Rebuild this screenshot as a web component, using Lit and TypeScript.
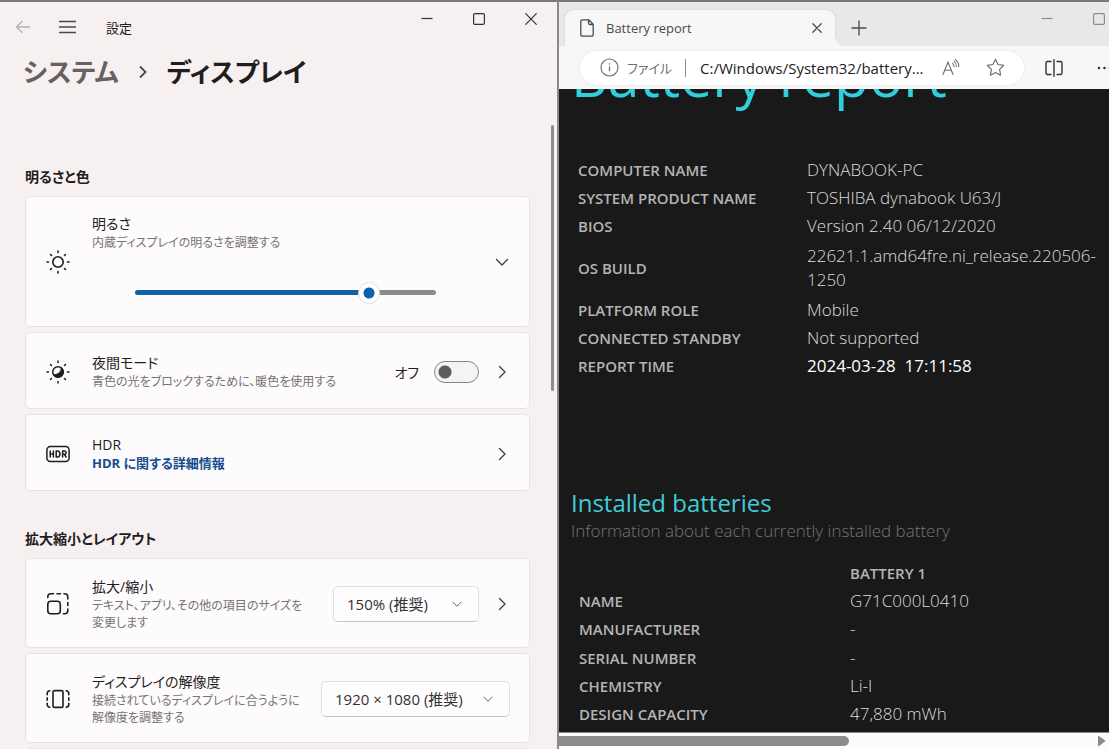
import { LitElement, html, css, svg, nothing } from "lit";
import { customElement, state } from "lit/decorators.js";
import { styleMap } from "lit/directives/style-map.js";

const chevronRight = html`<svg class="chev" width="16" height="16" viewBox="0 0 16 16" fill="none" stroke="currentColor" stroke-width="1.3" stroke-linecap="round" stroke-linejoin="round"><path d="M5.5 2.5 11 8l-5.500 5.500"/></svg>`;
const chevronDown = html`<svg class="chev" width="16" height="16" viewBox="0 0 16 16" fill="none" stroke="currentColor" stroke-width="1.3" stroke-linecap="round" stroke-linejoin="round"><path d="M2.500 5.500 8 11l5.500-5.500"/></svg>`;

const minimizeIcon = html`<svg width="14" height="14" viewBox="0 0 14 14" fill="none" stroke="currentColor" stroke-width="1.2"><path d="M1.500 6.500h11"/></svg>`;
const maximizeIcon = html`<svg width="14" height="14" viewBox="0 0 14 14" fill="none" stroke="currentColor" stroke-width="1.2"><rect x="1.600" y="1.600" width="10.800" height="10.800" rx="1.500"/></svg>`;
const closeIcon = html`<svg width="14" height="14" viewBox="0 0 14 14" fill="none" stroke="currentColor" stroke-width="1.2" stroke-linecap="round"><path d="m1.700 1.700 10.600 10.600M12.300 1.700 1.700 12.300"/></svg>`;

const sunRays = svg`<path d="M12 1v1.500M12 21.500V23M1 12h1.500M21.500 12H23M4.500 4.500l1 1M18.500 18.500l1 1M19.500 4.500l-1 1M5.500 18.500l-1 1"/>`;
const sunIcon = html`<svg width="24" height="24" viewBox="0 0 24 24" fill="none" stroke="currentColor" stroke-width="1.600" stroke-linecap="round"><circle cx="12" cy="12" r="5.200"/>${sunRays}</svg>`;
const nightIcon = html`<svg width="24" height="24" viewBox="0 0 24 24" fill="none" stroke="currentColor" stroke-width="1.500" stroke-linecap="round"><circle cx="12" cy="12" r="5.300"/><path d="M15.200 7.600c.2 4.400-3 7.200-7.700 6.900a5.200 5.200 0 0 0 9.800-2.500 5.200 5.200 0 0 0-2.100-4.400z" fill="currentColor" stroke-width=".8"/>${sunRays}</svg>`;
const hdrIcon = html`<svg width="24" height="24" viewBox="0 0 24 24" fill="none" stroke="currentColor" stroke-width="1.500" stroke-linecap="round" stroke-linejoin="round"><rect x=".9" y="4.500" width="22.200" height="15" rx="3.500"/><path d="M4.200 9v6M7.400 9v6M4.200 12h3.200M10.200 9v6M10.200 9h1.200c3.300 0 3.300 6 0 6h-1.200M16.600 15V9h1.800c2.300 0 2.300 3.300 0 3.300h-1.800M18.500 12.500l1.600 2.500"/></svg>`;
const scaleIcon = html`<svg width="24" height="24" viewBox="0 0 24 24" fill="none" stroke="currentColor" stroke-width="1.600" stroke-linecap="round"><rect x="1.800" y="9.300" width="12.500" height="12.500" rx="3"/><path d="M1.800 5.500V4.800a3 3 0 0 1 3-3H7.500M11 1.800h3.500M18 1.800h.8a3 3 0 0 1 3 3V7M21.800 10.500v3M21.800 17v1.800a3 3 0 0 1-3 3h-1.300"/></svg>`;
const resolutionIcon = html`<svg width="24" height="24" viewBox="0 0 24 24" fill="none" stroke="currentColor" stroke-width="1.600" stroke-linecap="round"><rect x="7" y="3.600" width="10" height="16.800" rx="1.500"/><path d="M3.800 3.800a2.600 2.600 0 0 0-2.600 2.600v1.400M1.200 10.800v2.400M1.200 16.200v1.400a2.600 2.600 0 0 0 2.600 2.600M20.200 3.800a2.600 2.600 0 0 1 2.600 2.600v1.400M22.800 10.800v2.400M22.800 16.200v1.400a2.600 2.600 0 0 1-2.600 2.600"/></svg>`;

const base = css`
  * { box-sizing: border-box; }
  h1, h2, p { margin: 0; font-weight: inherit; }
  button, input, select { font: inherit; color: inherit; margin: 0; }
  button { border: 0; padding: 0; background: none; display: grid; place-items: center; flex: none; }
  svg { display: block; flex: none; }
`;

@customElement("settings-window")
class SettingsWindow extends LitElement {
  @state() private brightness = 80;

  static styles = [base, css`
    :host {
      display: flex; flex-direction: column; min-width: 0; overflow: hidden;
      background: #f6f0f0; color: #1f1d1d;
      border-top: 2px solid #7b7979; border-right: 2px solid #8b8888;
      font-family: "Open Sans", "Noto Sans CJK JP", sans-serif;
      font-feature-settings: "palt";
    }
    .titlebar { display: flex; height: 50px; flex: none; align-items: flex-start; }
    .nav { display: flex; flex: 1; align-items: center; height: 50px; padding-left: 14px; gap: 28px; font-size: 13px; }
    .nav button { width: 17px; height: 32px; }
    .nav span { padding-left: 2px; }
    .back { color: #b5b0b0; }
    .menu { color: #4a4747; }
    .caption { width: 52px; height: 33px; color: #333131; }
    .crumbs { display: flex; align-items: center; gap: 20px; height: 40px; flex: none; padding-left: 23px; font-size: 26px; line-height: 40px; font-weight: 600; }
    .crumbs a { color: #666262; text-decoration: none; }
    .crumbs svg { color: #4a4747; }
    .body { display: flex; flex: 1; min-height: 0; overflow: hidden; padding-left: 25px; }
    .list { flex: 1; min-width: 0; padding-top: 73px; }
    .scroll { width: 3px; height: 266px; margin: 33px 3px 0 21px; border-radius: 2px; background: #8e8b8b; flex: none; }
    .heading { font-size: 14px; line-height: 24px; font-weight: 700; margin-bottom: 7px; }
    .group { display: flex; flex-direction: column; gap: 5px; margin-bottom: 36px; }
    .card {
      display: flex; align-items: center; min-height: 77px; padding: 16px 19px 14px 20px;
      background: #fdfbfc; border: 1px solid #e9e2e2; border-radius: 5px;
    }
    .icon { margin-right: 22px; }
    .text { flex: 1; min-width: 0; }
    .name { display: block; font-size: 14px; line-height: 20px; }
    .note { font-size: 12px; line-height: 17px; color: #777374; white-space: pre-line; }
    .more { width: 16px; height: 32px; color: #3d3a3a; }
    .card a { display: block; font-size: 13px; line-height: 17px; font-weight: 700; color: #154c8c; text-decoration: none; }
    .slider {
      appearance: none; display: block; width: calc(100% - 101px); max-width: 640px; height: 22px; margin: 30px 0 0 43px; background: none;
    }
    .slider::-webkit-slider-runnable-track {
      height: 5px; border-radius: 3px;
      background: linear-gradient(to right, #1560a4 var(--fill), #8c8a8a var(--fill));
    }
    .slider::-webkit-slider-thumb {
      appearance: none; width: 22px; height: 22px; margin-top: -8px; border-radius: 50%;
      border: 1px solid #dfe3e3; background: radial-gradient(circle, #0b61b0 5px, #fff 6px);
    }
    .switch-label { font-size: 14px; margin-right: 15px; }
    .switch {
      appearance: none; width: 45px; height: 22px; border: 1px solid #858383; border-radius: 11px; margin-right: 15px;
      background: radial-gradient(circle at 10px 10px, #5d5b5b 6px, #f5f3f4 7px);
    }
    .pick { display: flex; align-items: center; margin-left: 12px; }
    .pick select {
      appearance: none; height: 36px; padding: 0 13px; border: 1px solid #e4dfdf; border-bottom-color: #c9c5c5;
      border-radius: 5px; background: #fefdfe; font-size: 15px; grid-area: 1 / 1; color: #333131;
    }
    .combo { display: grid; align-items: center; }
    .combo svg { grid-area: 1 / 1; justify-self: end; margin-right: 16px; width: 12px; height: 12px; pointer-events: none; color: #5c5959; }
    .scale { width: 146px; }
    .resolution { width: 189px; }
    .pick .more { margin-left: 15px; }
    .tall { min-height: 131px; align-items: stretch; padding-top: 17px; padding-bottom: 17px; }
    .tall .icon, .tall .more { align-self: center; }
    .two { min-height: 90px; }
  `];

  private slide(e: Event) {
    this.brightness = Number((e.target as HTMLInputElement).value);
  }

  render() {
    const fill = styleMap({ "--fill": `${this.brightness}%` });
    return html`
      <header class="titlebar">
        <div class="nav">
          <button class="back" aria-label="戻る"><svg width="16" height="16" viewBox="0 0 16 16" fill="none" stroke="currentColor" stroke-width="1.300" stroke-linecap="round" stroke-linejoin="round"><path d="M14.500 8h-13M7 2.500 1.500 8 7 13.500"/></svg></button>
          <button class="menu" aria-label="メニュー"><svg width="17" height="14" viewBox="0 0 17 14" fill="none" stroke="currentColor" stroke-width="1.300"><path d="M0 1.500h17M0 7h17M0 12.500h17"/></svg></button>
          <span>設定</span>
        </div>
        <button class="caption" aria-label="最小化">${minimizeIcon}</button>
        <button class="caption" aria-label="最大化">${maximizeIcon}</button>
        <button class="caption" aria-label="閉じる">${closeIcon}</button>
      </header>
      <h1 class="crumbs">
        <a href="#system">システム</a>
        <svg width="8" height="14" viewBox="0 0 8 14" fill="none" stroke="currentColor" stroke-width="1.800"><path d="M1 1.500 6.500 7 1 12.500"/></svg>
        <span>ディスプレイ</span>
      </h1>
      <div class="body">
        <main class="list">
          <h2 class="heading">明るさと色</h2>
          <div class="group">
            <section class="card tall">
              <div class="icon">${sunIcon}</div>
              <div class="text">
                <label class="name" for="brightness">明るさ</label>
                <p class="note">内蔵ディスプレイの明るさを調整する</p>
                <input id="brightness" class="slider" type="range" min="0" max="100" .value=${String(this.brightness)} style=${fill} @input=${this.slide}>
              </div>
              <button class="more" aria-label="展開">${chevronDown}</button>
            </section>
            <section class="card">
              <div class="icon">${nightIcon}</div>
              <div class="text">
                <span class="name">夜間モード</span>
                <p class="note">青色の光をブロックするために、暖色を使用する</p>
              </div>
              <label class="switch-label" for="night">オフ</label>
              <input id="night" class="switch" type="checkbox" role="switch">
              <button class="more" aria-label="夜間モード">${chevronRight}</button>
            </section>
            <section class="card">
              <div class="icon">${hdrIcon}</div>
              <div class="text">
                <span class="name">HDR</span>
                <a href="#hdr">HDR に関する詳細情報</a>
              </div>
              <button class="more" aria-label="HDR">${chevronRight}</button>
            </section>
          </div>
          <h2 class="heading">拡大縮小とレイアウト</h2>
          <div class="group">
            ${this.choice("scale", scaleIcon, "拡大/縮小", "テキスト、アプリ、その他の項目のサイズを\n変更します", "150% (推奨)", true)}
            ${this.choice("resolution", resolutionIcon, "ディスプレイの解像度", "接続されているディスプレイに合うように\n解像度を調整する", "1920 × 1080 (推奨)", false)}
            <section class="card"></section>
          </div>
        </main>
        <div class="scroll"></div>
      </div>`;
  }

  private choice(id: string, icon: unknown, name: string, note: string, value: string, more: boolean) {
    return html`
      <section class="card two">
        <div class="icon">${icon}</div>
        <div class="text">
          <label class="name" for=${id}>${name}</label>
          <p class="note">${note}</p>
        </div>
        <div class="pick">
          <div class="combo"><select id=${id} class=${id}><option>${value}</option></select>${chevronDown}</div>
          ${more ? html`<button class="more" aria-label=${name}>${chevronRight}</button>` : nothing}
        </div>
      </section>`;
  }
}

const system = [
  ["COMPUTER NAME", "DYNABOOK-PC"],
  ["SYSTEM PRODUCT NAME", "TOSHIBA dynabook U63/J"],
  ["BIOS", "Version 2.40 06/12/2020"],
  ["OS BUILD", "22621.1.amd64fre.ni_release.220506-1250"],
  ["PLATFORM ROLE", "Mobile"],
  ["CONNECTED STANDBY", "Not supported"],
  ["REPORT TIME", "2024-03-28\u00a0 17:11:58"],
];
const battery = [
  ["NAME", "G71C000L0410"],
  ["MANUFACTURER", "-"],
  ["SERIAL NUMBER", "-"],
  ["CHEMISTRY", "Li-I"],
  ["DESIGN CAPACITY", "47,880 mWh"],
];

@customElement("browser-window")
class BrowserWindow extends LitElement {
  static styles = [base, css`
    :host {
      display: flex; flex-direction: column; min-width: 0; overflow: hidden;
      border-top: 2px solid #7b7979; background: #191919; color: #dcdcdc;
      font-family: "Open Sans", "Noto Sans CJK JP", sans-serif;
      font-feature-settings: "palt";
    }
    .tabs { display: flex; height: 44px; flex: none; padding-left: 6px; background: #e8e8e8; color: #4b4b4b; }
    .tab {
      position: relative; display: flex; align-items: center; width: 270px; margin-top: 8px; padding: 0 10px 0 15px;
      background: #f7f7f7; border-radius: 9px 9px 0 0; box-shadow: 0 0 2px #c4c4c4; font-size: 13px;
    }
    .tab span { flex: 1; margin-left: 12px; }
    .tab::after {
      content: ""; position: absolute; left: 100%; bottom: 0; width: 8px; height: 8px;
      background: radial-gradient(circle at 100% 0, #e8e8e8 7px, #f7f7f7 8px);
    }
    .tab button { width: 16px; height: 24px; }
    .new { width: 48px; margin-top: 8px; height: 36px; }
    .spacer { flex: 1; }
    .caption { width: 52px; height: 34px; color: #8c8c8c; }
    .caption:last-child { margin-right: -16px; }
    .toolbar { display: flex; align-items: center; height: 43px; flex: none; padding: 0 0 0 21px; background: #f7f7f7; color: #333; z-index: 1; }
    .address {
      display: flex; align-items: center; flex: 1; min-width: 0; height: 34px; padding: 0 19px 0 20px;
      border-radius: 17px; background: #fff; box-shadow: 0 0 3px #e4e4e4; font-size: 13px; color: #6f6f6f;
    }
    .address label { margin: 0 13px 0 8px; flex: none; }
    .rule { width: 1px; height: 18px; background: #8b8b8b; margin-right: 14px; flex: none; }
    .address input { flex: 1; min-width: 0; border: 0; padding: 0; background: none; outline: 0; color: #222; font-size: 15px; }
    .address button { width: 20px; height: 28px; margin-left: 24px; }
    .address input + button { margin-left: 12px; }
    .tool { width: 32px; height: 32px; margin-left: 14px; }
    .dots { width: 32px; height: 32px; margin: 0 -12px 0 19px; }
    .page { flex: 1; min-height: 0; overflow: hidden; padding: 0 12px; }
    .title { margin-top: -52px; font-size: 57px; line-height: 76px; color: #2fcfdd; white-space: nowrap; }
    table { border-collapse: collapse; font-size: 17px; line-height: 24px; }
    th, td { padding: 0; text-align: left; }
    th { font-size: 15px; font-weight: 600; color: #b4b4b4; }
    td { font-weight: 300; }
    .system { width: 100%; height: 224px; margin: 43px 0 107px 7px; }
    .system th { width: 229px; }
    .system tr:last-child td { color: #fff; font-weight: 400; }
    .sub { font-size: 24px; line-height: 32px; color: #40cdd6; }
    .lead { font-size: 17px; line-height: 24px; font-weight: 300; color: #747474; }
    .battery { width: 100%; height: 169px; margin: 16px 0 0 8px; }
    .battery th:first-child { width: 271px; }
    .hbar { display: flex; align-items: center; height: 17px; flex: none; background: #fcfcfc; border-top: 1px solid #8a8a8a; padding-right: 3px; }
    .thumb { width: 53%; height: 10px; border-radius: 0 5px 5px 0; background: #8c8c8c; }
    .hbar button { margin-left: auto; }
  `];

  render() {
    return html`
      <div class="tabs">
        <div class="tab">
          <svg width="14" height="18" viewBox="0 0 14 18" fill="none" stroke="currentColor" stroke-width="1.300" stroke-linejoin="round"><path d="M2.500.8h6.200l4.500 4.500v10.200a1.700 1.700 0 0 1-1.700 1.700h-9a1.700 1.700 0 0 1-1.700-1.700v-13A1.700 1.700 0 0 1 2.500.8zM8.500 1v3a1.500 1.500 0 0 0 1.500 1.500h3"/></svg>
          <span>Battery report</span>
          <button aria-label="タブを閉じる"><svg width="10" height="10" viewBox="0 0 10 10" stroke="currentColor" stroke-width="1.300" stroke-linecap="round"><path d="m.8.8 8.400 8.400M9.200.8.8 9.200"/></svg></button>
        </div>
        <button class="new" aria-label="新しいタブ"><svg width="16" height="16" viewBox="0 0 16 16" stroke="currentColor" stroke-width="1.300"><path d="M8 .5v15M.5 8h15"/></svg></button>
        <div class="spacer"></div>
        <button class="caption" aria-label="最小化">${minimizeIcon}</button>
        <button class="caption" aria-label="最大化">${maximizeIcon}</button>
      </div>
      <div class="toolbar">
        <div class="address">
          <svg width="19" height="19" viewBox="0 0 19 19" fill="none" stroke="currentColor" stroke-width="1.200"><circle cx="9.500" cy="9.500" r="8.500"/><path d="M9.500 8.300v5"/><circle cx="9.500" cy="5.900" r=".5" fill="currentColor" stroke-width=".6"/></svg>
          <label for="url">ファイル</label>
          <div class="rule"></div>
          <input id="url" type="text" value="C:/Windows/System32/battery...">
          <button aria-label="音声で読み上げる"><svg width="18" height="17" viewBox="0 0 18 17" fill="none" stroke="currentColor" stroke-width="1.100" stroke-linecap="round" stroke-linejoin="round"><path d="M1 15.500 6 3l5 12.500M2.800 11.200h6.400M10.500 4.300c1 .9 1.400 1.900 1.400 3.300M12 2.200c1.700 1.400 2.400 3.200 2.300 5.400M13.500.6c2.300 1.800 3.400 4.200 3.200 7"/></svg></button>
          <button aria-label="お気に入り"><svg width="19" height="19" viewBox="0 0 19 19" fill="none" stroke="currentColor" stroke-width="1.200" stroke-linejoin="round"><path d="m9.500 1.200 2.500 5.300 5.800.8-4.200 4.100 1 5.800-5.100-2.700-5.100 2.700 1-5.800L1.200 7.300l5.800-.8z"/></svg></button>
        </div>
        <button class="tool" aria-label="画面を分割"><svg width="18" height="18" viewBox="0 0 18 18" fill="none" stroke="currentColor" stroke-width="1.400" stroke-linecap="round"><path d="M9 .8v16.400M6 2.500H2.500a1.500 1.500 0 0 0-1.500 1.500v10a1.500 1.500 0 0 0 1.500 1.500H6M12 2.500h3.500A1.500 1.500 0 0 1 17 4v10a1.500 1.500 0 0 1-1.500 1.500H12"/></svg></button>
        <button class="dots" aria-label="設定など"><svg width="16" height="4" viewBox="0 0 16 4" fill="currentColor"><circle cx="2" cy="2" r="1.300"/><circle cx="7.500" cy="2" r="1.300"/><circle cx="13" cy="2" r="1.300"/></svg></button>
      </div>
      <main class="page">
        <h1 class="title">Battery report</h1>
        <table class="system">
          ${system.map(([k, v]) => html`<tr><th scope="row">${k}</th><td>${v}</td></tr>`)}
        </table>
        <h2 class="sub">Installed batteries</h2>
        <p class="lead">Information about each currently installed battery</p>
        <table class="battery">
          <tr><th></th><th scope="col">BATTERY 1</th></tr>
          ${battery.map(([k, v]) => html`<tr><th scope="row">${k}</th><td>${v}</td></tr>`)}
        </table>
      </main>
      <div class="hbar">
        <div class="thumb"></div>
        <button aria-label="右へスクロール"><svg width="9" height="12" viewBox="0 0 9 12" fill="#8a8a8a"><path d="M1 1.500v9q0 1 1 .4l6-4.300q.7-.6 0-1.200L2 1.100Q1 .5 1 1.500z"/></svg></button>
      </div>`;
  }
}

@customElement("app-root")
class AppRoot extends LitElement {
  static styles = css`
    :host { display: grid; grid-template-columns: 559fr 550fr; grid-template-rows: 100%; height: 100vh; overflow: hidden; }
  `;
  render() {
    return html`<settings-window></settings-window><browser-window></browser-window>`;
  }
}
